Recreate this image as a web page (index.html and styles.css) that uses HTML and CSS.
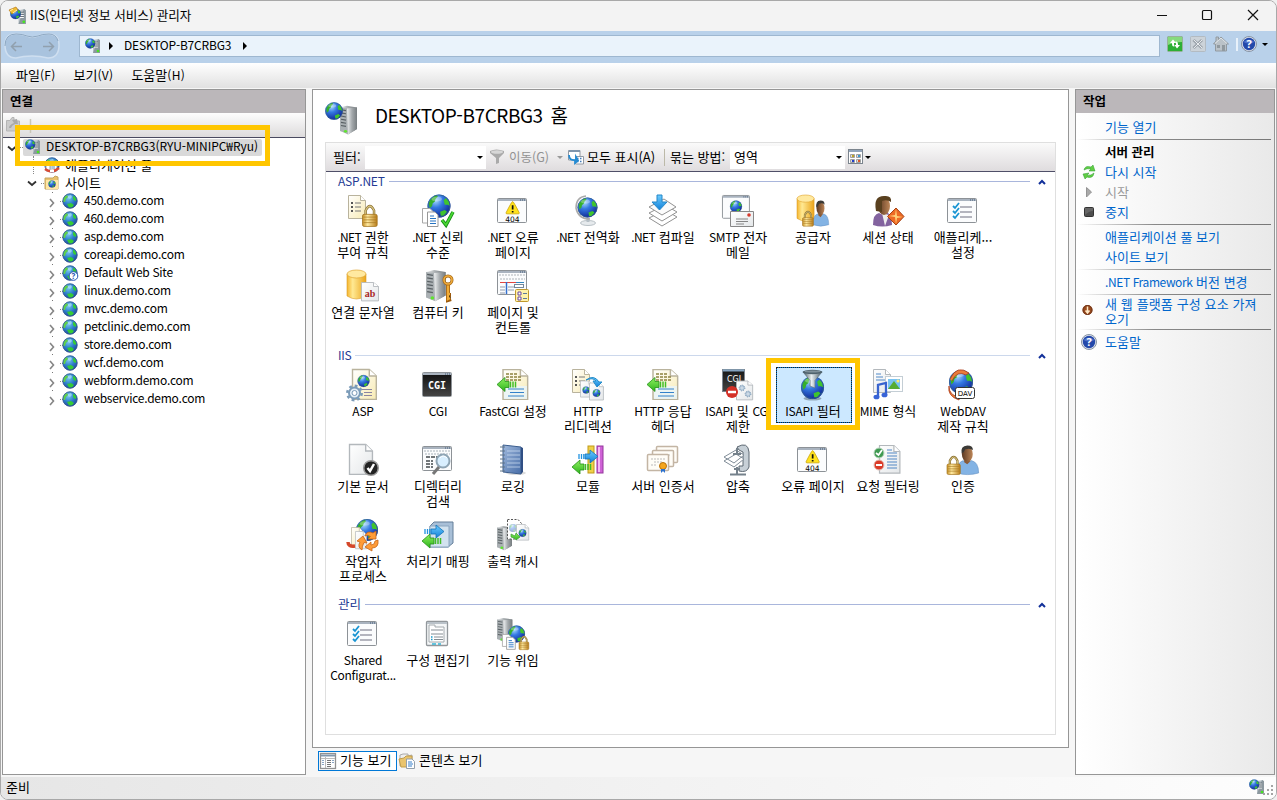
FILE: index.html
```html
<!DOCTYPE html>
<html lang="ko">
<head>
<meta charset="utf-8">
<title>IIS(인터넷 정보 서비스) 관리자</title>
<link rel="stylesheet" href="styles.css">
</head>
<body>
<svg class="sprite" width="0" height="0" aria-hidden="true">
<defs>
<radialGradient id="sea" cx=".35" cy=".25" r=".8"><stop offset="0" stop-color="#a8dcfb"/><stop offset=".4" stop-color="#3478e2"/><stop offset="1" stop-color="#0d2390"/></radialGradient>
<radialGradient id="sea16" cx=".4" cy=".3" r=".75"><stop offset="0" stop-color="#7cc6ef"/><stop offset=".5" stop-color="#2f83cc"/><stop offset="1" stop-color="#1e3f98"/></radialGradient>
<linearGradient id="metal"><stop offset="0" stop-color="#f0f2f3"/><stop offset=".5" stop-color="#a4a9ac"/><stop offset="1" stop-color="#777d80"/></linearGradient>
<linearGradient id="cone"><stop offset="0" stop-color="#3f515c"/><stop offset=".45" stop-color="#e8eff2"/><stop offset="1" stop-color="#44555f"/></linearGradient>
<linearGradient id="gold"><stop offset="0" stop-color="#c68f25"/><stop offset=".35" stop-color="#ffeaa0"/><stop offset="1" stop-color="#b87b18"/></linearGradient>
<linearGradient id="drum"><stop offset="0" stop-color="#f5b52e"/><stop offset=".3" stop-color="#ffe993"/><stop offset="1" stop-color="#eba41a"/></linearGradient>
<linearGradient id="paper" x2="1" y2="1"><stop offset="0" stop-color="#ffffff"/><stop offset="1" stop-color="#f8ebb4"/></linearGradient>
<linearGradient id="blank" x2="1" y2="1"><stop offset="0" stop-color="#ffffff"/><stop offset="1" stop-color="#e4e7e9"/></linearGradient>
<linearGradient id="grn" x2="0" y2="1"><stop offset="0" stop-color="#8ff060"/><stop offset="1" stop-color="#2db41c"/></linearGradient>
<linearGradient id="blu" x2="0" y2="1"><stop offset="0" stop-color="#6cccff"/><stop offset="1" stop-color="#1280d8"/></linearGradient>
<linearGradient id="skin"><stop offset="0" stop-color="#5c3922"/><stop offset="1" stop-color="#bd8658"/></linearGradient>
<linearGradient id="navy" x2="1" y2="1"><stop offset="0" stop-color="#9fb8dc"/><stop offset="1" stop-color="#486ea8"/></linearGradient>
<linearGradient id="night" x2="0" y2="1"><stop offset="0" stop-color="#151515"/><stop offset="1" stop-color="#444"/></linearGradient>

<g id="globe"><circle r="10" fill="url(#sea)"/><path d="M-9-2C-8-6-5-8.500-2-9.500L-1-8-3-6-3.500-4-5.500-2.500-6 0-8 2Z" fill="#35b02c"/><path d="M4-5 6-7 8.500-4 9.500 0 7.500-1 5-1ZM1 5 5 3.500 7 5 4 8.500 1.500 8.500Z" fill="#3fc42e"/><ellipse cx="-2" cy="-6" rx="4.500" ry="2" fill="#fff" opacity=".3"/><circle r="9.600" fill="none" stroke="#36638e" stroke-width=".7"/></g>
<g id="globe16"><circle r="7.400" fill="url(#sea16)"/><path d="M-6.800-1C-6-4-5-5-3-6L-2-4-4-2-5 1-6.500 1Z" fill="#5fd04a"/><path d="M3-5 5-4.500 6.500-1 5 0 3-2ZM-3 3 1 2 4 4 2 6.500-1 6.500Z" fill="#35cc35"/><path d="M-2-5 1-6 2-4 0-2-2-3Z" fill="#b0e2f5" opacity=".7"/><circle r="7.200" fill="none" stroke="#3a5c92" stroke-width=".8"/></g>
<g id="tower"><path d="M0 2 7 0 17 2V26L8 32 0 28Z" fill="url(#metal)"/><path d="M0 2 7 3V31L0 28Z" fill="#aab0b3"/><path d="M7 3 17 2V26L8 32Z" fill="url(#metal)"/><path d="M1 4.500 6 5.500M1 8 6 9M1 11.500 6 12.500M1 15 6 16M1 18.500 6 19.500M1 22 6 23" stroke="#596064" stroke-width="1.300"/><circle cx="5.500" cy="28.500" r="1.600" fill="#5fe52e"/></g>
<g id="lock"><path d="M3 9V5Q7-3 11 5V9" fill="none" stroke="#8d7334" stroke-width="2.400"/><path d="M3 9V5Q7-3 11 5V9" fill="none" stroke="#dcca86" stroke-width="1"/><rect y="8.500" width="14" height="11" rx="1.500" fill="url(#gold)" stroke="#a2731d" stroke-width=".7"/><path d="M1 11H13M1 13.500H13M1 16H13" stroke="#a77924" stroke-width=".8" opacity=".8"/></g>
<g id="sheet"><path d="M0 0H12L17 5V23H0Z" fill="url(#blank)" stroke="#b3b8bc"/><path d="M12 0V5H17" fill="#fff" stroke="#b3b8bc"/></g>
<g id="cream"><path d="M0 0H12L17 5V23H0Z" fill="url(#paper)" stroke="#b9b39d"/><path d="M12 0V5H17" fill="#fff" stroke="#b9b39d"/></g>
<g id="list"><path d="M3 8H5M3 12H5M3 16H5" stroke="#555" stroke-width="2"/><path d="M7 8H13M7 12H13M7 16H13" stroke="#777"/></g>
<g id="docs"><path d="M.5.500H8L11 3.500V15H.5Z" fill="#fff" stroke="#a8a8a8"/><path d="M5.500 4H13L16 7V18.500H5.500Z" fill="#fff" stroke="#989898"/><path d="M8 8H12M8 10.500H14M8 13H14M8 15.500H14" stroke="#2673c2" stroke-width="1.100"/></g>
<g id="frame"><rect x=".5" y=".5" width="29" height="24" rx="1" fill="#fbfcfd" stroke="#8d9297"/><path d="M1 2H29" stroke="#a9b3bf" stroke-width="2"/><path d="M23 2H24M25 2H26M27 2H28" stroke="#3e5978"/></g>
<g id="drumshape"><path d="M0 4V26Q9.500 32 19 26V4Z" fill="url(#drum)" stroke="#d99a25" stroke-width=".6"/><ellipse cx="9.500" cy="4" rx="9.500" ry="4" fill="#ffe9a0" stroke="#e0a530" stroke-width=".7"/></g>
<g id="man"><path d="M0 25Q0 15 6 13.500L10 16 14 13.500Q21 15 21 25Q10 28 0 25Z" fill="#83b3e4" stroke="#5888bd" stroke-width=".5"/><path d="M7 11V15L10 17 13 14V10Z" fill="#8a5a36"/><ellipse cx="10" cy="7.500" rx="5.300" ry="7" fill="url(#skin)"/><path d="M4.500 7Q3 0 10-.5Q16-.5 15.300 4Q13 1.500 8 3Q7 6 4.500 7Z" fill="#3c3a37"/></g>
<g id="arrowL"><path d="M0 7 8 0V4H12V10H8V14Z" fill="url(#grn)" stroke="#269019" stroke-width=".8"/><path d="M13.500 4V10M16 4V10M18.500 4V10" stroke="#42bd26" stroke-width="1.500"/></g>
<g id="arrowR"><path d="M20 6.500 12 0V4H7V9H12V13Z" fill="url(#blu)" stroke="#1472b7" stroke-width=".8"/><path d="M1 4V9M3.500 4V9M5.800 4V9" stroke="#2193e0" stroke-width="1.300"/></g>
<g id="check"><path d="M0 8 4 13 11 0" fill="none" stroke="#168b18" stroke-width="3.500"/><path d="M0 8 4 13 11 0" fill="none" stroke="#4ad733" stroke-width="1.800"/></g>
<g id="warn"><path d="M7 0Q8 0 14 12Q14 13 13 13H1Q0 13 0 12Q6 0 7 0Z" fill="#ffe21e" stroke="#c9a000" stroke-width=".8"/><path d="M7 4V8.500M7 10V11.500" stroke="#111" stroke-width="1.800"/></g>
<g id="medal"><circle r="3.500" fill="#f5a61e" stroke="#b9730d"/><path d="M-2 3V7L0 5 2 7V3Z" fill="#2a71cf"/></g>
<g id="cert"><rect x=".5" y=".5" width="21" height="16" rx="1" fill="#fffdf7" stroke="#c3b5a4" stroke-width="1.500"/><path d="M4 5H18M7 8H15M4 11H9" stroke="#bbb" stroke-dasharray="2 1"/></g>
<g id="cog"><circle r="5.500" fill="#e6eff7" stroke="#7b9bb8" stroke-width="2"/><circle r="7.200" fill="none" stroke="#7b9bb8" stroke-width="2.500" stroke-dasharray="2.800 2.850"/><circle r="2.500" fill="#fff" stroke="#7b9bb8"/></g>
<g id="ticks"><path d="M13 10H25M13 15H25M13 20H25" stroke="#6f6f80" stroke-width="1.200"/><path d="M6 9 8 11 12 6M6 14 8 16 12 11M6 19 8 21 12 16" fill="none" stroke="#1894d2" stroke-width="1.800"/></g>
<symbol id="errorpage" viewBox="0 0 32 32"><use href="#frame" x="0" y="3"/><use href="#warn" transform="translate(9 6.500) scale(.95)"/><text x="15.500" y="26.500" text-anchor="middle" class="t404">404</text></symbol>
<symbol id="settings" viewBox="0 0 32 32"><use href="#frame" y="3"/><use href="#ticks" y="2"/></symbol>
<symbol id="headers" viewBox="0 0 32 32"><use href="#cream" transform="matrix(1.450 0 0 1.300 6 .5)"/><path d="M7 17H30V30H7Z" fill="#e9f5fb" opacity=".8"/><path d="M9 5H20M9 8H25M9 11H25" stroke="#8d8340" stroke-width="1.500" stroke-dasharray="3 1"/><use href="#arrowL" y="8.500"/><path d="M11 20H27M13 23.500H27M11 27H27" stroke="#3482ca"/></symbol>
<symbol id="host" viewBox="0 0 16 16"><path d="M8 2 14 1V14L8 15Z" fill="#b7c1c7"/><path d="M13 1 15 2V15L8 15Z" fill="#8c989f"/><path d="M9 5H13M9 7H13M9 9H13" stroke="#fafafa"/><path d="M9 4H13M9 6H13M9 8H13" stroke="#5a656d" stroke-width=".7"/><circle cx="13" cy="13" r="1.300" fill="#45e520"/><use href="#globe" transform="translate(5.200 5.400) scale(.5)"/></symbol>
<symbol id="site" viewBox="0 0 16 16"><use href="#globe16" x="8" y="8"/></symbol>
<symbol id="help" viewBox="0 0 16 16"><circle cx="8" cy="8" r="7.500" fill="#dfe4ed" stroke="#8793a4"/><circle cx="8" cy="8" r="6.200" fill="#2449aa"/><path d="M2.500 6Q8 1 13.500 6Q8 9 2.500 6" fill="#7094e5" opacity=".55"/><text x="8" y="12" text-anchor="middle" class="help-mark">?</text></symbol>
<symbol id="chev" viewBox="0 0 10 10"><path d="M3 1 6.500 5 3 9" fill="none" stroke="#858585" stroke-width="1.600"/></symbol>
<symbol id="open" viewBox="0 0 10 10"><path d="M1 3.500 5 7 9 3.500" fill="none" stroke="#333" stroke-width="1.800"/></symbol>
<symbol id="up" viewBox="0 0 8 6"><path d="M1 5 4 2 7 5" fill="none" stroke="#12309a" stroke-width="2"/></symbol>
</defs>
</svg>

<div class="window">
  <header class="titlebar">
    <svg class="app-icon" viewBox="0 0 18 18"><use href="#host" x="1" y="1" width="17" height="17"/><path d="M0 3 7 0 9 3 3 7Z" fill="#f0bd37" stroke="#b77a16" stroke-width=".7"/><path d="M1 4 4 2M4 6 8 3" stroke="#fff2b2"/></svg>
    <span class="caption">IIS(인터넷 정보 서비스) 관리자</span>
    <svg class="winbtns" viewBox="0 0 120 30"><path d="M7 15.500H17" stroke="#111"/><rect x="52.500" y="10.500" width="9" height="9" rx="1" fill="none" stroke="#111" stroke-width="1.200"/><path d="M98 10 108 20M108 10 98 20" stroke="#111" stroke-width="1.200"/></svg>
  </header>

  <div class="navband">
    <svg class="navpill" viewBox="0 0 58 30"><path d="M2 14Q2 3 12 3Q20 3 24 5Q29 7 35 5Q39 3 46 3Q56 3 56 14Q56 27 45 27Q37 25 29 25Q20 25 13 27Q2 27 2 14Z" fill="#a9c3de" stroke="#cfdff0" stroke-width="1.500"/><path d="M2 15Q2 3 13 3Q20 3 24 5Q29 7 35 5Q39 3 46 3Q53 3 55 10" fill="none" stroke="#8ca7c2"/><path d="M19 15.500H9M13 11 8.500 15.500 13 20M40 15.500H50M46 11 50.500 15.500 46 20" fill="none" stroke="#91a0ae" stroke-width="1.500"/></svg>
    <div class="address">
      <svg class="i16" viewBox="0 0 16 16"><use href="#host"/></svg>
      <i class="tri first"></i><span class="host-name">DESKTOP-B7CRBG3</span><i class="tri"></i>
    </div>
    <div class="navicons">
      <svg class="i16" viewBox="0 0 16 16"><rect x=".5" y=".5" width="15" height="15" rx="1" fill="#2caf34" stroke="#98b19a"/><path d="M1 1H15V6Q7 6 1 9Z" fill="#85da7d"/><path d="M7.500 10.500Q5 11 5 8V7H3L6 3.500 9 7H7Q7 9 7.500 10.500ZM8.500 5.500Q11 5 11 8V9H13L10 12.500 7.500 9H9Q9 7 8.500 5.500Z" fill="#fff"/></svg>
      <svg class="i16" viewBox="0 0 16 16"><rect x=".5" y=".5" width="15" height="15" rx="1" fill="#ccd3d9" stroke="#b3bbc2"/><path d="M3.500 4 12 12M12 4 3.500 12" stroke="#9da5ad" stroke-width="3"/><path d="M4 4 12 12M12 4 4 12" stroke="#e7ebee"/></svg>
      <svg class="i16" viewBox="0 0 16 16"><path d="M3 1H5.500V4L8 1 15.500 8H13.500V15H2.500V8H.5L3 5Z" fill="#bac2c8" stroke="#929aa0"/><path d="M4 9H7V12H4ZM9 9H12V15H9Z" fill="#90999f"/><path d="M2 7.500 8 2 14 7.500" fill="none" stroke="#e2e6e8"/></svg>
      <i class="navsep"></i>
      <svg class="i16" viewBox="0 0 16 16"><use href="#help"/></svg>
      <i class="down"></i>
    </div>
  </div>

  <nav class="menubar"><span>파일<b class="la">(F)</b></span><span>보기<b class="la">(V)</b></span><span>도움말<b class="la">(H)</b></span></nav>

  <main class="workspace">
    <aside class="pane connections">
      <h2>연결</h2>
      <div class="tree-tools"><svg viewBox="0 0 28 18"><path d="M.5 4.500H4L6 1.500H8V5H13.500V15H.5Z" fill="#ccc" stroke="#b5b5b5"/><path d="M3 12Q3 9 8 7L6 4 11 3 12 8 9 8Q6 9 5 12" fill="#a9a9a9"/><path d="M24.500 3V17" stroke="#c9c7b8" stroke-width="1.500"/></svg></div>
      <div class="tree">
        <div class="node root"><svg class="tw"><use href="#open"/></svg><i class="dots"></i><span class="sel"><svg class="i16" viewBox="0 0 16 16"><use href="#host"/></svg><span class="name">DESKTOP-B7CRBG3(RYU-MINIPC₩Ryu)</span></span></div>
        <div class="node pools"><i class="dots"></i><svg class="i16" viewBox="0 0 16 16"><use href="#site"/><path d="M2 6H7V14H2ZM6 4H13V14H6Z" fill="#fff" stroke="#90a5b5"/><path d="M8 7H11M8 9H11M8 11H11" stroke="#598aba"/><path d="M1 12Q8 17 15 11" fill="none" stroke="#d84b36" stroke-width="2.500"/><path d="M6 14H10" stroke="#fff" stroke-width="2.500"/></svg><span>애플리케이션 풀</span></div>
        <div class="node sites"><svg class="tw"><use href="#open"/></svg><i class="dots"></i><svg class="i16" viewBox="0 0 16 16"><path d="M1 3H9L11 1 14 2V14H1Z" fill="#eac36d" stroke="#c4a462"/><path d="M2 5H14V14H2Z" fill="#ffe7a4"/><use href="#globe" transform="translate(8 9) scale(.36)"/></svg><span>사이트</span></div>
        <div class="node site"><svg class="tw"><use href="#chev"/></svg><i class="dots"></i><svg class="i16"><use href="#site"/></svg><span>450.demo.com</span></div>
        <div class="node site"><svg class="tw"><use href="#chev"/></svg><i class="dots"></i><svg class="i16"><use href="#site"/></svg><span>460.demo.com</span></div>
        <div class="node site"><svg class="tw"><use href="#chev"/></svg><i class="dots"></i><svg class="i16"><use href="#site"/></svg><span>asp.demo.com</span></div>
        <div class="node site"><svg class="tw"><use href="#chev"/></svg><i class="dots"></i><svg class="i16"><use href="#site"/></svg><span>coreapi.demo.com</span></div>
        <div class="node site"><svg class="tw"><use href="#chev"/></svg><i class="dots"></i><svg class="i16" viewBox="0 0 16 16"><use href="#site"/><circle cx="11.500" cy="11" r="4.300" fill="#fff" stroke="#2754b3"/><text x="11.500" y="14" text-anchor="middle" class="badge-mark">?</text></svg><span>Default Web Site</span></div>
        <div class="node site"><svg class="tw"><use href="#chev"/></svg><i class="dots"></i><svg class="i16"><use href="#site"/></svg><span>linux.demo.com</span></div>
        <div class="node site"><svg class="tw"><use href="#chev"/></svg><i class="dots"></i><svg class="i16"><use href="#site"/></svg><span>mvc.demo.com</span></div>
        <div class="node site"><svg class="tw"><use href="#chev"/></svg><i class="dots"></i><svg class="i16"><use href="#site"/></svg><span>petclinic.demo.com</span></div>
        <div class="node site"><svg class="tw"><use href="#chev"/></svg><i class="dots"></i><svg class="i16"><use href="#site"/></svg><span>store.demo.com</span></div>
        <div class="node site"><svg class="tw"><use href="#chev"/></svg><i class="dots"></i><svg class="i16"><use href="#site"/></svg><span>wcf.demo.com</span></div>
        <div class="node site"><svg class="tw"><use href="#chev"/></svg><i class="dots"></i><svg class="i16"><use href="#site"/></svg><span>webform.demo.com</span></div>
        <div class="node site"><svg class="tw"><use href="#chev"/></svg><i class="dots"></i><svg class="i16"><use href="#site"/></svg><span>webservice.demo.com</span></div>
      </div>
    </aside>

    <section class="centre">
      <div class="pane home">
        <div class="home-title"><svg class="i32" viewBox="0 0 32 32"><use href="#tower" x="15" y="3" transform="translate(0 1) scale(1 .9)"/><use href="#globe" transform="translate(9 9) scale(.88)"/></svg><h1>DESKTOP-B7CRBG3 <span>홈</span></h1></div>
        <div class="features">
          <div class="filterbar">
            <span class="lbl">필터:</span><div class="combo search"><i class="down"></i></div>
            <svg class="funnel" viewBox="0 0 16 16"><path d="M1 2Q7-1 15 2V4L10 9V14L7 15V9L1 4Z" fill="#aaa"/><ellipse cx="8" cy="3" rx="6" ry="1.700" fill="#d7d7d7"/></svg>
            <span class="go">이동(G)</span><i class="down pale"></i>
            <svg class="showall" viewBox="0 0 16 16"><path d="M.5 1.500H12V11H.5Z" fill="#fff" stroke="#929aa4"/><path d="M1 2H12" stroke="#8095ac" stroke-width="2"/><path d="M7.500 7.500H15.500V15H7.500Z" fill="#fff" stroke="#929aa4"/><path d="M9 9.500H14M9 12.500H14" stroke="#3f79b8" stroke-width="1.700" stroke-dasharray="1.500 1.500"/><path d="M1 6Q1 12 8 11V8L10 11.500 7 14V12" fill="none" stroke="#268bd2" stroke-width="1.800"/></svg>
            <span class="all">모두 표시(A)</span><i class="barsep"></i><span class="by">묶는 방법:</span><div class="combo group"><span>영역</span><i class="down"></i></div>
            <svg class="view" viewBox="0 0 16 16"><rect x=".5" y=".5" width="14" height="14" fill="#fff" stroke="#7c858e"/><path d="M1 2H14" stroke="#90a4bb" stroke-width="2"/><path d="M2.500 5.500H6.500V8.500H2.500ZM8.500 5.500H12.500V8.500H8.500ZM2.500 10.500H6.500V13.500H2.500ZM8.500 10.500H12.500V13.500H8.500Z" fill="#ddd" stroke="#a0a0a0"/><path d="M4 7H6" stroke="#bda423" stroke-width="2"/><path d="M10 7H12" stroke="#3796ce" stroke-width="2"/><path d="M4 12H6" stroke="#213dcc" stroke-width="2"/><path d="M10 12H12" stroke="#da5529" stroke-width="2"/></svg><i class="down last"></i>
          </div>

          <section class="group-block">
            <h3><span class="la">ASP.NET</span><i class="rule"></i><svg class="collapse"><use href="#up"/></svg></h3>
            <div class="tiles">
              <div class="tile"><svg viewBox="0 0 32 32"><use href="#cream" x="1.500" y=".5"/><use href="#list" x="1"/><use href="#lock" transform="translate(15.500 10) scale(1.050 1.100)"/></svg><span><b class="la net">.NET</b> 권한<br>부여 규칙</span></div>
              <div class="tile"><svg viewBox="0 0 32 32"><use href="#globe" transform="translate(17 11) scale(1.150)"/><use href="#docs" y="13"/><use href="#check" x="20" y="17"/></svg><span><b class="la net">.NET</b> 신뢰<br>수준</span></div>
              <div class="tile"><svg viewBox="0 0 32 32"><use href="#errorpage"/></svg><span><b class="la net">.NET</b> 오류<br>페이지</span></div>
              <div class="tile"><svg viewBox="0 0 32 32"><ellipse cx="16" cy="28" rx="7.500" ry="2.500" fill="#e6eaed" stroke="#b9c1c6"/><path d="M16 23V27" stroke="#b5bfc6" stroke-width="3"/><path d="M14 1Q4 2 4 13Q6 24 18 24" fill="none" stroke="#aaa" stroke-width="1.500"/><use href="#globe" transform="translate(15.500 12.500)"/></svg><span><b class="la net">.NET</b> 전역화</span></div>
              <div class="tile"><svg viewBox="0 0 32 32"><path d="M2 23 15 31 30 22 18 15Z" fill="#fff" stroke="#929292"/><path d="M2 18 15 26 30 17 18 10Z" fill="#fff" stroke="#929292"/><path d="M2 12 15 20 29 12 17 4Z" fill="#fcfcfc" stroke="#929292"/><path d="M10 0H15V7H20L12.500 15 5 7H10Z" fill="url(#blu)" stroke="#2587c8"/></svg><span><b class="la net">.NET</b> 컴파일</span></div>
              <div class="tile"><svg viewBox="0 0 32 32"><use href="#frame" transform="scale(.93 .95)"/><use href="#globe" transform="translate(14 11.500) scale(.6)"/><path d="M8.500 16.500H31.500V31.500H8.500Z" fill="url(#blank)" stroke="#888"/><path d="M14 24H26M14 26.500H26M14 29H22" stroke="#858585"/><circle cx="27" cy="20" r="1.800" fill="#d6392c"/></svg><span><b class="la">SMTP</b> 전자<br>메일</span></div>
              <div class="tile"><svg viewBox="0 0 32 32"><use href="#drumshape" transform="scale(.9 .9)"/><use href="#man" transform="translate(16 6) scale(.75 .95)"/><use href="#lock" transform="translate(5.500 16) scale(.78)"/></svg><span>공급자</span></div>
              <div class="tile"><svg viewBox="0 0 32 32"><path d="M1 30Q1 19 7 18L11 20 14 17Q20 19 20 30Q10 33 1 30" fill="#83639f"/><path d="M10 18 17 20 13 31Z" fill="#eee"/><ellipse cx="12" cy="11" rx="6" ry="9" fill="url(#skin)"/><path d="M4 16Q1 1 12 1Q20 0 19 7Q15 4 10 6V17Z" fill="#59401f"/><path d="M24 13 32 21.500 24 30 15.500 21.500Z" fill="#ee6a24" stroke="#a54215"/><path d="M24 14 25 21 31 22 25 23 24 29 23 22 17 21 23 20Z" fill="#ffd078"/></svg><span>세션 상태</span></div>
              <div class="tile"><svg viewBox="0 0 32 32"><use href="#settings"/></svg><span>애플리케...<br>설정</span></div>
              <div class="tile"><svg viewBox="0 0 32 32"><use href="#drumshape"/><use href="#sheet" transform="translate(14.500 12.500) scale(1 .8)"/><text x="23" y="26.500" text-anchor="middle" class="ab">ab</text></svg><span>연결 문자열</span></div>
              <div class="tile"><svg viewBox="0 0 32 32"><use href="#tower" transform="translate(4 0) scale(1.150 .98)"/><path d="M26 14V30L29 29M26 25H29" stroke="#9c5a0d" stroke-width="4"/><path d="M26 14V29L28 28M26 24H28" stroke="#f0ab36" stroke-width="2.500"/><circle cx="26" cy="10" r="4" fill="none" stroke="#a66716" stroke-width="3"/><circle cx="26" cy="10" r="4" fill="none" stroke="#efad3d" stroke-width="1.600"/></svg><span>컴퓨터 키</span></div>
              <div class="tile"><svg viewBox="0 0 32 32"><use href="#frame"/><path d="M2 5H28M3 9H28" stroke="#aeb4b9" stroke-dasharray="2 1"/><path d="M3 12.500H19" stroke="#e3453e"/><path d="M19 12.500H27" stroke="#3185bd"/><path d="M3 17H8M3 20H8M3 23H8M11 17H17M11 20H17" stroke="#919cac"/><path d="M9.500 12V24" stroke="#306fce" stroke-width="1.500"/><rect x="17.500" y="14.500" width="9" height="3" fill="#fff" stroke="#75889a"/><rect x="18.500" y="19.500" width="13" height="12" rx="1" fill="#fff2aa" stroke="#bf982c"/><path d="M21 22H24V25H21ZM21 27H24V30H21Z" fill="#fff" stroke="#6a49a0"/><path d="M26 23.500H30M26 28.500H30" stroke="#5d789a"/></svg><span>페이지 및<br>컨트롤</span></div>
            </div>
          </section>

          <section class="group-block">
            <h3><span class="la">IIS</span><i class="rule light"></i><svg class="collapse"><use href="#up"/></svg></h3>
            <div class="tiles">
              <div class="tile"><svg viewBox="0 0 32 32"><use href="#cream" transform="translate(5.500 .5) scale(1.400 1.300)"/><use href="#globe" transform="translate(16.500 12) scale(.6)"/><use href="#cog" x="7.500" y="24"/><path d="M15 20.500H25M17 23.500H25M17 26.500H25" stroke="#8b84a1"/></svg><span class="la">ASP</span></div>
              <div class="tile"><svg viewBox="0 0 32 32"><use href="#frame" y="3"/><rect x="1" y="6" width="28" height="21" fill="url(#night)"/><text x="15" y="19.500" text-anchor="middle" class="cgi">CGI</text></svg><span class="la">CGI</span></div>
              <div class="tile"><svg viewBox="0 0 32 32"><use href="#headers"/></svg><span><b class="la">FastCGI</b> 설정</span></div>
              <div class="tile"><svg viewBox="0 0 32 32"><use href="#cream" x=".5" y=".5"/><use href="#list"/><use href="#sheet" transform="translate(8.500 12) scale(.7)"/><use href="#globe" transform="translate(14 21) scale(.35)"/><use href="#sheet" transform="translate(17.500 14) scale(.82 .74)"/><use href="#globe" transform="translate(24.500 24) scale(.38)"/><path d="M14 11Q22 5 27 13L30 13 25 18 21 12 24 12Q21 8 14 11" fill="url(#blu)" stroke="#248bc9"/></svg><span><b class="la">HTTP</b><br>리디렉션</span></div>
              <div class="tile"><svg viewBox="0 0 32 32"><use href="#headers"/></svg><span><b class="la">HTTP</b> 응답<br>헤더</span></div>
              <div class="tile"><svg viewBox="0 0 32 32"><rect x=".5" y=".5" width="22" height="22" fill="url(#night)" stroke="#7d8792"/><path d="M1 1.500H22" stroke="#83a2bf" stroke-width="2"/><text x="12" y="13" text-anchor="middle" class="cgi-small">CGI</text><use href="#sheet" transform="translate(14.500 12) scale(.95 .82)"/><use href="#cog" transform="translate(20 19) scale(.4)"/><use href="#cog" transform="translate(26 25) scale(.4)"/><circle cx="10" cy="23" r="6" fill="#d43027"/><path d="M6 23H14" stroke="#fff" stroke-width="2.500"/></svg><span><b class="la">ISAPI</b> 및 <b class="la">CGI</b><br>제한</span></div>
              <div class="tile selected"><svg viewBox="0 0 32 32"><ellipse cx="15.500" cy="29.500" rx="9" ry="2" fill="#8fa5b7"/><use href="#globe" transform="translate(15.500 18.500) scale(1.150)"/><path d="M6 3 13 11.500V17L18 19V11.500L25 3Z" fill="url(#cone)" stroke="#5a6d79" stroke-width=".6"/><ellipse cx="15.500" cy="3" rx="10" ry="2.200" fill="#4f626d"/><ellipse cx="15.500" cy="2.500" rx="8" ry="1.100" fill="#7f909a"/></svg><span><b class="la">ISAPI</b> 필터</span></div>
              <div class="tile"><svg viewBox="0 0 32 32"><use href="#sheet" x="1.500" y=".5"/><path d="M4 5H9M4 8H11M4 11H15" stroke="#5089c8"/><rect x="13.500" y="7.500" width="17" height="15" fill="#fff" stroke="#c4ced5"/><rect x="16" y="10" width="12" height="10" fill="#78c3f2"/><path d="M16 20 22 12 28 20Z" fill="#56ac32"/><circle cx="26" cy="12" r="1.500" fill="#ffec6e"/><path d="M6 28V16L14 14V26" fill="none" stroke="#3763cf" stroke-width="2.300"/><ellipse cx="4.500" cy="28" rx="3" ry="2.300" fill="#3864d7"/><ellipse cx="12.500" cy="26" rx="3" ry="2.300" fill="#3864d7"/></svg><span><b class="la">MIME</b> 형식</span></div>
              <div class="tile"><svg viewBox="0 0 32 32"><use href="#globe" transform="translate(14 13) scale(1.200)"/><path d="M3 10Q10-5 22 4L19 6Q10 1 5 12M2 17Q2 27 13 28L12 31Q0 27 2 17" fill="#e97c3c" stroke="#a83414" stroke-width=".7"/><rect x="8.500" y="18.500" width="19" height="11" rx="2" fill="#fff" stroke="#333"/><text x="18" y="27" text-anchor="middle" class="dav">DAV</text></svg><span><b class="la">WebDAV</b><br>제작 규칙</span></div>
              <div class="tile"><svg viewBox="0 0 32 32"><use href="#sheet" transform="translate(2.500 .5) scale(1.350 1.300)"/><circle cx="24" cy="24" r="7.300" fill="#222" stroke="#9a9a9a" stroke-width="1.500"/><path d="M20.500 24 23 27 27 20" fill="none" stroke="#fff" stroke-width="2.500"/></svg><span>기본 문서</span></div>
              <div class="tile"><svg viewBox="0 0 32 32"><use href="#frame" y="2"/><path d="M2 7H28M3 10H28" stroke="#a8b2ba" stroke-dasharray="2 1"/><path d="M4 13H17M4 17H11M4 20H11M4 23H11" stroke="#44494d" stroke-width="1.300" stroke-dasharray="4 1"/><circle cx="21" cy="17" r="6.500" fill="#d9efff" stroke="#8fa5b5" stroke-width="2"/><path d="M17 23 11 30" stroke="#777" stroke-width="3"/><path d="M18 14Q21 10 25 14" stroke="#fff" fill="none"/></svg><span>디렉터리<br>검색</span></div>
              <div class="tile"><svg viewBox="0 0 32 32"><ellipse cx="19" cy="29" rx="10" ry="2" fill="#ddd"/><path d="M6 1 24 3V30L6 28Z" fill="url(#navy)" stroke="#3c5e8e"/><path d="M24 3 26 4V28L24 30" fill="#304f84"/><path d="M10 7H23M10 11H23M10 15H23M10 19H23M10 23H23" stroke="#d3e3f5" stroke-width=".7"/><path d="M3 3H8M3 7H8M3 11H8M3 15H8M3 19H8M3 23H8M3 27H8" stroke="#617487"/></svg><span>로깅</span></div>
              <div class="tile"><svg viewBox="0 0 32 32"><rect x="16" y="2" width="6" height="27" fill="#f0d04a" stroke="#bf9a19"/><rect x="25" y="2" width="6" height="27" fill="#cf62d6" stroke="#93369c"/><path d="M27 3V28" stroke="#f3b9f5" stroke-width="2"/><use href="#arrowR" x="6" y="6"/><use href="#arrowL" y="16"/></svg><span>모듈</span></div>
              <div class="tile"><svg viewBox="0 0 32 32"><use href="#cert" x="9" y="2"/><use href="#cert" x="5" y="6"/><use href="#cert" x="0" y="10"/><use href="#medal" x="16" y="22"/></svg><span>서버 인증서</span></div>
              <div class="tile"><svg viewBox="0 0 32 32"><path d="M15 3Q26-3 27 8V23Q25 29 17 27V22H21V8L17 6Z" fill="#c7d0d7" stroke="#5d6872"/><path d="M2 17 12 23 22 15 14 10ZM2 13 12 19 22 11 14 6Z" fill="#fff" stroke="#818d98"/><path d="M15 4V10M11 10H19M15 23V30M12 25H18M8 30.500H24" stroke="#75818b" stroke-width="2"/></svg><span>압축</span></div>
              <div class="tile"><svg viewBox="0 0 32 32"><use href="#errorpage"/></svg><span>오류 페이지</span></div>
              <div class="tile"><svg viewBox="0 0 32 32"><use href="#sheet" transform="translate(7.500 1.500) scale(1.200)"/><path d="M15 6H20M15 9H25M15 12H25M15 15H25M15 18H25M15 21H25M15 24H25" stroke="#5087c4"/><circle cx="7" cy="9" r="5" fill="#3f9a51" stroke="#bed8c3"/><path d="M4 9 6.500 11 10 6" fill="none" stroke="#fff" stroke-width="1.800"/><circle cx="7" cy="21" r="5" fill="#db3b28" stroke="#e5c0b8"/><path d="M4 21H10" stroke="#fff" stroke-width="2"/></svg><span>요청 필터링</span></div>
              <div class="tile"><svg viewBox="0 0 32 32"><use href="#man" transform="translate(10 2) scale(1.030 1.080)"/><use href="#lock" transform="translate(0 12) scale(.95)"/></svg><span>인증</span></div>
              <div class="tile"><svg viewBox="0 0 32 32"><use href="#globe" transform="translate(20 11) scale(1.100)"/><use href="#cream" transform="translate(4.500 8.500) scale(.65 .8)"/><use href="#sheet" transform="translate(8.500 12.500) scale(.65 .75)"/><path d="M1 23Q1 28 8 27" fill="none" stroke="#d4472a" stroke-width="3.500"/><path d="M18 17Q20 11 26 14L29 12V20H21L23.500 17.500Q20 15.500 18 17Z" fill="#ff9c37" stroke="#c66417" stroke-width=".8"/><path d="M15 31Q10 28 13 23L10 22 16 17 20 24 17 23.500Q15 27 15 31Z" fill="#ff9c37" stroke="#c66417" stroke-width=".8"/><path d="M31 21Q32 29 25 29V32L18 28 24 23V26Q28 26 28 22Z" fill="#ff9c37" stroke="#c66417" stroke-width=".8"/></svg><span>작업자<br>프로세스</span></div>
              <div class="tile"><svg viewBox="0 0 32 32"><path d="M8 7 12 3H31V24L26 28H8Z" fill="#a8bfd7" stroke="#657f99"/><path d="M8 7H27V28H8Z" fill="#d2e2ef" stroke="#8aa5bf"/><use href="#arrowR" transform="translate(2 6)"/><use href="#arrowL" transform="translate(0 15)"/></svg><span>처리기 매핑</span></div>
              <div class="tile"><svg viewBox="0 0 32 32"><use href="#tower" transform="translate(0 7) scale(.88 .76)"/><path d="M10.500.500H21L25 5V20H10.500Z" fill="#fff" stroke="#555" stroke-dasharray="2 1.500"/><g opacity=".4"><use href="#globe" transform="translate(16 9) scale(.4)"/></g><use href="#sheet" transform="translate(19.500 5.500) scale(.72 .68)"/><use href="#globe" transform="translate(25.500 14) scale(.38)"/><path d="M14 15 18 17 19 14 23 18 19 21 18 19.500 14 18Z" fill="url(#grn)" stroke="#3c9c33" stroke-width=".7"/></svg><span>출력 캐시</span></div>
            </div>
          </section>

          <section class="group-block">
            <h3><span>관리</span><i class="rule"></i><svg class="collapse"><use href="#up"/></svg></h3>
            <div class="tiles">
              <div class="tile"><svg viewBox="0 0 32 32"><use href="#settings"/></svg><span class="la">Shared<br>Configurat...</span></div>
              <div class="tile"><svg viewBox="0 0 32 32"><rect x="4.500" y="3.500" width="21" height="24" rx="1" fill="#f5f7f8" stroke="#92979b" stroke-width="1.300"/><path d="M5 5H25" stroke="#bac2c9" stroke-width="2"/><path d="M7 7H13V9H22V24H7Z" fill="#fff" stroke="#a4aaae"/><path d="M9 12H21M9 16H21M12 19H21M12 21.500H21" stroke="#858d93" stroke-width="1"/><path d="M9 19H10.500M9 21.500H10.500" stroke="#189bc9" stroke-width="1.500"/><path d="M10 26H14M16 26H19" stroke="#35b5d6" stroke-width="1.500"/></svg><span>구성 편집기</span></div>
              <div class="tile"><svg viewBox="0 0 32 32"><use href="#tower" transform="translate(0 0) scale(.9 .75)"/><use href="#globe" transform="translate(19.500 16) scale(.85)"/><use href="#docs" transform="translate(5 16) scale(.83)"/><use href="#lock" transform="translate(22 18) scale(.7)"/></svg><span>기능 위임</span></div>
            </div>
          </section>
        </div>
      </div>
      <div class="viewtabs">
        <div class="vtab active"><svg class="i16" viewBox="0 0 16 16"><rect x=".5" y=".5" width="15" height="15" fill="#fff" stroke="#929292" stroke-width="1.300"/><path d="M1 2.500H15" stroke="#8498ac" stroke-width="2"/><path d="M5.500 4V15M1 5.500H15" stroke="#bbb"/><path d="M2 7.500H4M2 9.500H4M2 11.500H4M12 7.500H14M12 9.500H14" stroke="#8aa5c4"/><path d="M7 7.500H11M7 9.500H11M7 11.500H11M7 13.500H11" stroke="#777"/></svg><span>기능 보기</span></div>
        <div class="vtab"><svg class="i16" viewBox="0 0 16 16"><path d="M1 2 4 1H9V3L13 2V13H1Z" fill="#eee" stroke="#aaa"/><path d="M0 6 5 5 7 3H13V14H2Z" fill="#e9c46e" stroke="#c19d4a"/><path d="M7.500 6H13L15.500 8.500V15.500H7.500Z" fill="#fff" stroke="#939fab"/><path d="M9 9H13M9 11H14M9 13H13" stroke="#367fc9"/></svg><span>콘텐츠 보기</span></div>
      </div>
    </section>

    <aside class="pane actions">
      <h2>작업</h2>
      <ul>
        <li class="open-feature">기능 열기</li>
        <li class="divider"></li>
        <li class="heading">서버 관리</li>
        <li><svg viewBox="0 0 16 16"><path d="M3 6Q4 1 10 3L12 1 14 7 8 7 10 5Q6 4 3 6ZM13 9Q12 15 6 13L4 15 2 10 8 9 6 11Q10 12 13 9Z" fill="#60ce43" stroke="#2b9830" stroke-width=".5"/></svg>다시 시작</li>
        <li class="disabled"><svg viewBox="0 0 16 16"><path d="M5.500 3.500 10.500 8 5.500 13Z" fill="#aaa" stroke="#949494"/></svg>시작</li>
        <li><svg viewBox="0 0 16 16"><rect x="3.500" y="3.500" width="9" height="9" rx="1" fill="#4d4d4d" stroke="#333"/><path d="M4 4H12V7Q8 7 4 11Z" fill="#666"/></svg>중지</li>
        <li class="divider"></li>
        <li>애플리케이션 풀 보기</li>
        <li>사이트 보기</li>
        <li class="divider"></li>
        <li><b class="la framework">.NET Framework</b> 버전 변경</li>
        <li class="divider"></li>
        <li class="tall"><svg viewBox="0 0 16 16"><circle cx="6.500" cy="8" r="5" fill="#994a1c"/><circle cx="6.500" cy="8" r="4.500" fill="none" stroke="#6e341b"/><path d="M6.500 4.500V11M4.500 8.500 6.500 11 8.500 8.500" stroke="#ffe8c6" stroke-width="1.500" fill="none"/></svg>새 웹 플랫폼 구성 요소 가져<br>오기</li>
        <li class="divider"></li>
        <li><svg viewBox="0 0 16 16"><use href="#help"/></svg>도움말</li>
      </ul>
    </aside>
  </main>

  <footer class="status"><span>준비</span><svg viewBox="0 0 26 20"><use href="#host" width="16" height="16" x="0" y="1"/><path d="M22 8H24M18 12H20M22 12H24M14 16H16M18 16H20M22 16H24" stroke="#a4a4a4" stroke-width="2"/></svg></footer>

  <div class="marker marker-tree"></div>
  <div class="marker marker-isapi"></div>
</div>
</body>
</html>
```

FILE: styles.css
```css
* { box-sizing: border-box; }
body {
  margin: 0;
  width: 1277px;
  height: 800px;
  overflow: hidden;
  background: #f0f0f0;
  color: #000;
  font: 13px/16px "Noto Sans CJK KR", sans-serif;
}
h1, h2, h3, ul { margin: 0; padding: 0; }
svg { display: block; flex: none; overflow: visible; }
.la { font-size: 12px; font-weight: 400; letter-spacing: -.25px; }
.net { letter-spacing: -.6px; }
.sprite { position: absolute; }
.window {
  position: relative;
  display: flex;
  flex-direction: column;
  width: 1277px;
  height: 800px;
  overflow: hidden;
  border: 1px solid #a8a8a8;
  border-radius: 8px;
  background: #f6f6f6;
}
.i16 { width: 16px; height: 16px; }
.i32 { width: 32px; height: 32px; }

/* title and navigation */
.titlebar { display: flex; align-items: center; height: 30px; padding: 0 8px; background: #f3f3f3; }
.app-icon { width: 18px; height: 18px; }
.caption { margin: -2px 0 0 3px; font-size: 12.600px; white-space: nowrap; }
.winbtns { width: 120px; height: 30px; margin: -2px -2px 0 auto; }
.navband { display: flex; height: 32px; background: #b9d1ea; }
.navpill { width: 58px; height: 30px; margin-left: 2px; }
.address {
  display: flex;
  align-items: center;
  width: 1081px;
  height: 22px;
  margin: 4px 0 0 18px;
  padding-left: 5px;
  border: 1px solid #9eb7d0;
  background: #eaf3fb;
  font-size: 12px;
}
.host-name { width: 107px; margin: -2px 12px 0 11px; letter-spacing: -.2px; white-space: nowrap; }
.tri { width: 0; height: 0; border: 4px solid transparent; border-left-color: #000; border-right: 0; }
.tri.first { margin-left: 8px; }
.down { width: 0; height: 0; border: 3px solid transparent; border-top-color: #000; border-bottom: 0; }
.navicons { display: flex; align-items: center; gap: 7px; height: 26px; margin-left: 7px; }
.navsep { width: 2px; height: 13px; background: #e8f1fa; }
.navicons .navsep + svg { margin-left: -4px; }
.navicons .down { margin-left: -2px; }
.menubar {
  display: flex;
  gap: 18px;
  height: 25px;
  padding: 4px 15px;
  background: linear-gradient(#fff, #e2e2e2);
  border-bottom: 1px solid #e2e2e2;
}
.menubar .la { letter-spacing: .3px; }

/* panes */
.workspace { display: flex; gap: 6px; height: 686px; margin: 1px 1px 0 1px; }
.pane { border: 1px solid #969696; background: #fff; }
.pane h2 { height: 23px; padding: 2px 7px; background: #bbb7ba; font-size: 12.500px; line-height: 17px; font-weight: 700; }
.connections { width: 304px; }
.tree-tools { height: 25px; padding: 3px 3px; border-bottom: 1px solid #4a4a60; background: linear-gradient(#fdfdfd, #dddbdc); }
.tree-tools svg { width: 28px; height: 18px; }
.node { position: relative; display: flex; align-items: center; height: 18px; white-space: nowrap; font-size: 13px; }
.tw { width: 10px; height: 10px; }
.dots { width: 3px; height: 1px; border-top: 1px dotted #888; }
.root { padding-left: 4px; }
.root .tw { margin-top: 2px; }
.root .dots { margin-left: 3px; }
.sel { display: flex; align-items: center; width: 239px; height: 17px; padding-left: 2px; border-radius: 2px; background: #d9d9d9; }
.sel .name { margin: -2px 0 0 5px; font-size: 12px; letter-spacing: -.05px; }
.pools { padding-left: 31px; }
.pools .dots { width: 10px; }
.pools::before { content: ""; position: absolute; left: 30px; top: 0; height: 18px; border-left: 1px dotted #888; }
.pools > span, .sites > span { margin: -1px 0 0 5px; }
.sites { padding-left: 24px; }
.sites .dots { margin-left: 4px; }
.site { padding-left: 44px; }
.site .tw { margin-top: 3px; }
.site .dots { margin-left: 3px; }
.site > .i16 { margin-left: -1px; }
.site .dots + .i16 { margin-right: 6px; }
.site > span { margin-top: -2px; font-size: 12px; letter-spacing: -.28px; }
.site::before { content: ""; position: absolute; left: 49px; top: 0; width: 1px; height: 1px; background: #777; }

.centre { display: flex; flex-direction: column; width: 757px; }
.home { height: 659px; padding: 12px; }
.home-title { display: flex; height: 40px; }
.home-title h1 { margin: 0 0 0 18px; font-size: 19px; line-height: 25px; font-weight: 400; letter-spacing: -.45px; white-space: nowrap; }
.home-title h1 span { margin-left: 3px; }
.features { height: 593px; border: 1px solid #dfdfdf; }
.filterbar {
  display: flex;
  align-items: center;
  height: 29px;
  padding-left: 7px;
  border-bottom: 1px solid #4f4f68;
  background: linear-gradient(#fafafa, #dfdcde);
  white-space: nowrap;
}
.filterbar > span { flex: none; margin-top: -1px; }
.lbl { width: 32px; }
.combo { display: flex; align-items: center; height: 23px; padding-right: 3px; background: #fff; }
.combo .down { margin-left: auto; }
.search { width: 121px; }
.funnel { width: 16px; height: 16px; margin-left: 3px; }
.go { width: 40px; margin-left: 4px; color: #929292; font-size: 12.500px; }
.pale { margin-left: 8px; border-top-color: #999; }
.showall { width: 16px; height: 16px; margin-left: 5px; }
.all { width: 72px; margin-left: 3px; }
.barsep { width: 1px; height: 17px; margin-left: 5px; background: #bcb9a8; }
.by { width: 59px; margin-left: 5px; }
.group { width: 115px; margin-left: 1px; padding-left: 4px; }
.group span { margin-top: -1px; }
.view { width: 16px; height: 16px; margin-left: 3px; }
.last { margin-left: 1px; }

/* feature groups */
.group-block { margin-bottom: 1px; }
.group-block h3 { display: flex; align-items: center; height: 23px; padding: 0 9px 4px 12px; color: #243b94; font-size: 12.500px; line-height: 16px; font-weight: 400; }
.group-block h3 span { margin-top: -1px; }
.rule { flex: 1; height: 1px; margin: 0 8px 0 4px; background: #a9b6dc; }
.rule.light { background: #ccd8ec; }
.collapse { width: 8px; height: 6px; }
.tiles { display: grid; grid-template-columns: repeat(9, 75px); grid-auto-rows: 75px; }
.tile { display: flex; flex-direction: column; text-align: center; line-height: 15px; white-space: nowrap; }
.tile > svg { width: 32px; height: 32px; margin-left: 21px; }
.tile > span { display: flow-root; align-self: center; margin: 2px 0 0 -1px; }
.selected { position: relative; z-index: 0; }
.selected::before { content: ""; position: absolute; z-index: -1; left: 0; top: -2px; width: 74px; height: 54px; border: 1px solid #0078d7; outline: 1px dotted #222; outline-offset: -1px; background: #cce8ff; }

.viewtabs { display: flex; align-items: center; height: 27px; padding: 0 0 1px 6px; }
.vtab { display: flex; align-items: center; height: 20px; padding: 0 1px; border: 1px solid transparent; white-space: nowrap; }
.vtab span { margin: -2px 0 0 4px; }
.active { width: 79px; border-color: #0078d7; background: #fff; }

/* actions */
.actions { width: 200px; background: linear-gradient(90deg, #fff, #e9e9e9); }
.actions ul { list-style: none; padding: 5px 3px 0 1px; color: #0066cc; }
.actions li { display: flow-root; position: relative; height: 20px; padding-left: 28px; line-height: 17px; font-size: 13px; white-space: nowrap; }
.actions li svg { position: absolute; left: 4px; top: 1px; width: 16px; height: 16px; }
.actions .divider { height: 1px; margin: 1px 0 3px; background: linear-gradient(90deg, transparent, #888 40%, #777); }
.actions .heading { color: #000; font-weight: 700; font-size: 12.500px; }
.actions .disabled { color: #9a9a9a; }
.actions .tall { height: 32px; margin-top: -2px; line-height: 15px; letter-spacing: .12px; }
.actions .tall svg { top: 6px; }
.framework { letter-spacing: -.4px; }

.status { display: flex; justify-content: space-between; height: 22px; margin-top: 2px; padding: 0 1px 0 5px; background: linear-gradient(90deg, #e6e6e6, #fdfdfd); line-height: 19px; }
.status svg { width: 26px; height: 20px; margin-top: 1px; }

.marker { position: absolute; border: 5px solid #ffc600; }
.marker-tree { left: 14px; top: 124px; width: 255px; height: 41px; }
.marker-isapi { left: 765px; top: 357px; width: 94px; height: 72px; }

.t404 { font: 7.500px "DejaVu Sans", sans-serif; }
.cgi { fill: #fff; font: 700 10px "DejaVu Sans Mono", monospace; }
.cgi-small { fill: #fff; font: 8px "DejaVu Sans", sans-serif; }
.dav { font: 7px "DejaVu Sans", sans-serif; }
.ab { fill: #a82525; font: 700 10px "Liberation Serif", serif; }
.help-mark { fill: #fff; font: 700 11px "Open Sans", sans-serif; }
.badge-mark { fill: #2754b3; font: 700 8px "Open Sans", sans-serif; }
```
